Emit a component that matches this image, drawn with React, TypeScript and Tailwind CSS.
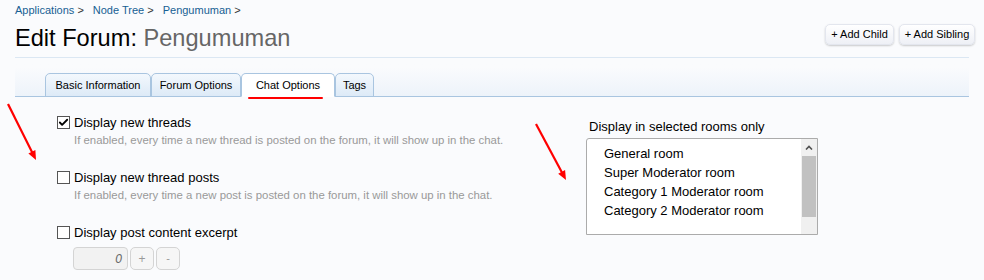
import { Check } from "lucide-react";

const TABS = [
  { label: "Basic Information", w: "w-[106px]" },
  { label: "Forum Options", w: "w-[90px]" },
  { label: "Chat Options", w: "w-[94px]", active: true },
  { label: "Tags", w: "w-[39px]" },
];

const ROOMS = [
  "General room",
  "Super Moderator room",
  "Category 1 Moderator room",
  "Category 2 Moderator room",
];

function Box({ checked }: { checked?: boolean }) {
  return (
    <span className="mt-[3px] flex h-[13px] w-[13px] shrink-0 items-center justify-center border border-[#555] bg-white">
      {checked && <Check className="h-[11px] w-[11px] text-black" strokeWidth={4} />}
    </span>
  );
}

function Option({ label, hint, checked }: { label: string; hint?: string; checked?: boolean }) {
  return (
    <div className="flex gap-[4px]">
      <Box checked={checked} />
      <div>
        <div className="text-[13px] leading-[19px] text-black">{label}</div>
        {hint && <div className="text-[11.4px] leading-[16px] text-[#999]">{hint}</div>}
      </div>
    </div>
  );
}

function Arrow({ className, x1, y1, x2, y2 }: { className: string; x1: number; y1: number; x2: number; y2: number }) {
  const ang = Math.atan2(y2 - y1, x2 - x1);
  const len = 10;
  const a1 = ang + Math.PI - 0.4;
  const a2 = ang + Math.PI + 0.4;
  return (
    <svg className={className} width="60" height="70" viewBox="0 0 60 70">
      <line x1={x1} y1={y1} x2={x2 - Math.cos(ang) * 4} y2={y2 - Math.sin(ang) * 4} stroke="#f00" strokeWidth="2.2" />
      <polygon
        fill="#f00"
        points={`${x2},${y2} ${x2 + Math.cos(a1) * len},${y2 + Math.sin(a1) * len} ${x2 + Math.cos(a2) * len},${y2 + Math.sin(a2) * len}`}
      />
    </svg>
  );
}

export default function App() {
  return (
    <div className="relative h-[280px] w-[984px] overflow-hidden bg-[#fafbfd] font-['Liberation_Sans',Arial,sans-serif]">
      {/* Header */}
      <div className="pl-[15px] pr-[9px] pt-[3px]">
        <div className="flex gap-[7px] text-[11px] leading-[14px]">
          {["Applications", "Node Tree", "Pengumuman"].map((c) => (
            <span key={c} className="mr-[2px]">
              <span className="text-[#176093]">{c}</span>
              <span className="text-[#333]"> &gt;</span>
            </span>
          ))}
        </div>
        <div className="mt-[6px] flex items-start justify-between">
          <h1 className="text-[23.6px] leading-[30px] text-black">
            Edit Forum: <span className="text-[#666]">Pengumuman</span>
          </h1>
          <div className="mt-[1px] flex gap-[5px]">
            {[
              { b: "+ Add Child", w: "w-[69px]" },
              { b: "+ Add Sibling", w: "w-[76px]" },
            ].map(({ b, w }) => (
              <button
                key={b}
                type="button"
                className={`h-[21px] ${w} rounded-[5px] border border-[#e3e6ee] bg-gradient-to-b from-white to-[#eef0f6] text-[11px] text-black shadow-[0_1px_2px_rgba(0,0,0,0.2)]`}
              >
                {b}
              </button>
            ))}
          </div>
        </div>
      </div>

      {/* Tab strip */}
      <div className="mx-[15px] mt-[4px] flex h-[40px] items-end border-t border-[#dbe7f3] border-b border-b-[#a9c5e0] bg-gradient-to-b from-[#fafbfd] from-[25%] to-[#edf3fa] pl-[30px]">
        {TABS.map((t) => (
          <div
            key={t.label}
            className={`relative -mb-px flex h-[24px] ${t.w} items-center justify-center rounded-t-[5px] border border-[#a9c5e0] text-[11px] text-black ${
              t.active ? "border-b-white bg-white" : "bg-gradient-to-b from-[#f3f8fd] to-[#ddeaf7]"
            }`}
          >
            {t.label}
            {t.active && <span className="absolute bottom-[-3px] left-[6px] h-[2px] w-[75px] rounded bg-[#f00]" />}
          </div>
        ))}
      </div>

      {/* Content */}
      <div className="flex pt-[16px]">
        <div className="ml-[57px] flex w-[529px] flex-col gap-[20px]">
          <Option
            checked
            label="Display new threads"
            hint="If enabled, every time a new thread is posted on the forum, it will show up in the chat."
          />
          <Option
            label="Display new thread posts"
            hint="If enabled, every time a new post is posted on the forum, it will show up in the chat."
          />
          <div>
            <Option label="Display post content excerpt" />
            <div className="ml-[16px] mt-[5px] flex gap-[2px]">
              <div className="flex h-[23px] w-[55px] items-center justify-end rounded-[4px] border border-[#d4d4d4] bg-[#f2f2f2] pr-[5px] text-[12px] italic text-[#666]">
                0
              </div>
              <div className="flex h-[23px] w-[24px] items-center justify-center rounded-[5px] border border-[#d4d4d4] bg-[#f6f6f6] text-[12px] text-[#999]">
                +
              </div>
              <div className="flex h-[23px] w-[24px] items-center justify-center rounded-[5px] border border-[#d4d4d4] bg-[#f6f6f6] text-[11px] text-[#999]">
                -
              </div>
            </div>
          </div>
        </div>

        <div className="pt-[5px]">
          <div className="ml-[3px] text-[13px] leading-[18px] text-black">Display in selected rooms only</div>
          <div className="mt-[2px] flex h-[97px] w-[232px] rounded-tl-[3px] border border-[#ababab] bg-white">
            <div className="flex-1 pl-[17px] pt-[5px] text-[13px] leading-[19px] text-black">
              {ROOMS.map((r) => (
                <div key={r}>{r}</div>
              ))}
            </div>
            <div className="flex w-[16px] flex-col bg-[#f0f0f0]">
              <div className="flex h-[17px] items-center justify-center">
                <svg width="8" height="5" viewBox="0 0 8 5">
                  <path d="M1 4.5 L4 1.5 L7 4.5" fill="none" stroke="#505050" strokeWidth="1.6" />
                </svg>
              </div>
              <div className="mx-[1px] h-[61px] bg-[#c1c1c1]" />
            </div>
          </div>
        </div>
      </div>

      {/* Annotation arrows */}
      <Arrow className="absolute left-0 top-[100px]" x1={8} y1={4} x2={36} y2={60} />
      <Arrow className="absolute left-[528px] top-[120px]" x1={8} y1={4} x2={38} y2={60} />
    </div>
  );
}
